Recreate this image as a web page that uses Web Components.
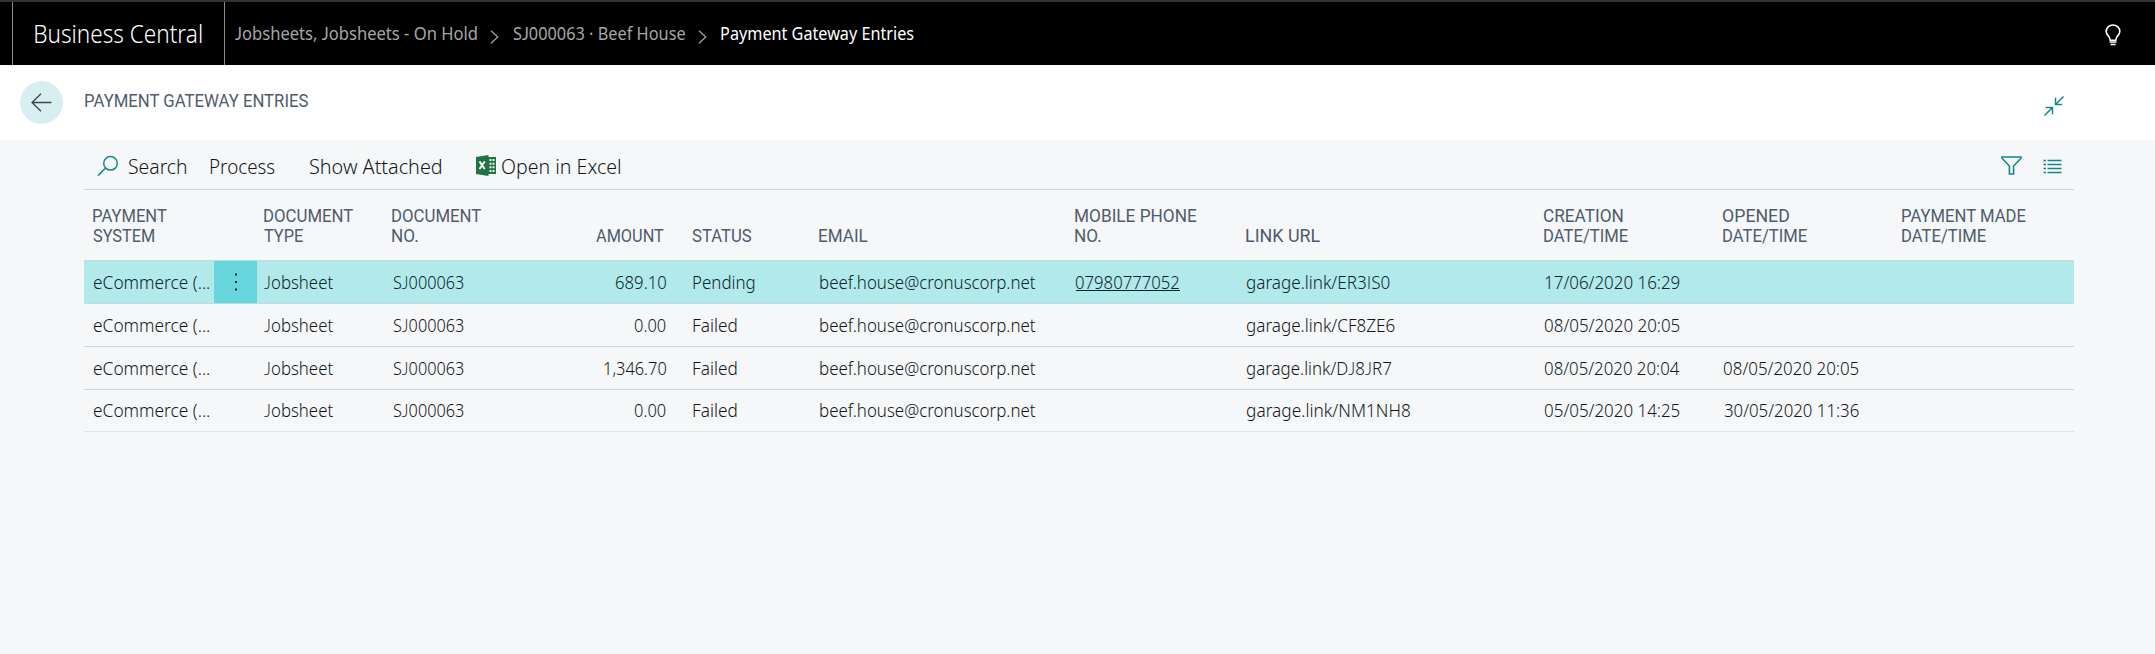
<!DOCTYPE html>
<html lang="en">
<head>
<meta charset="utf-8">
<title>Payment Gateway Entries</title>
<style>
html,body{margin:0;padding:0;background:#f5f7f9}
body{font-family:"Noto Sans","Open Sans",sans-serif;width:2155px;height:654px;overflow:hidden}
</style>
</head>
<body>
<bc-app></bc-app>
<script>
const define = (name, html, init) => customElements.define(name, class extends HTMLElement {
  connectedCallback() {
    if (this.shadowRoot) return;
    this.attachShadow({mode: 'open'}).innerHTML = html;
    if (init) init(this, this.shadowRoot);
  }
});

/* Single-line label whose glyphs are fitted to the width given in "w".
   Capital I and J use Lato, whose forms are plain and sit on the baseline. */
const ruler = document.createElement('canvas').getContext('2d');
define('bc-text', `<style>
  :host{display:block;flex:none;white-space:nowrap;line-height:20px;font-size:18px}
  span{display:block;width:max-content;transform-origin:0 50%}
  i{font-style:normal;font-family:Lato,sans-serif;line-height:0}
</style><span></span>`, (el, root) => {
  const span = root.querySelector('span'), w = +el.getAttribute('w');
  const cs = getComputedStyle(span);
  const runs = cs.fontFamily.startsWith('Roboto') ? [el.getAttribute('label')] : el.getAttribute('label').split(/([IJ])/).filter(Boolean);
  let total = 0, left = 0;
  runs.forEach((t, i) => {
    const alt = runs.length > 1 && /^[IJ]$/.test(t);
    ruler.font = `${cs.fontWeight} ${cs.fontSize} ${alt ? 'Lato' : cs.fontFamily}`;
    const m = ruler.measureText(t);
    if (i === 0) left = m.actualBoundingBoxLeft;
    total += i === runs.length - 1 ? m.actualBoundingBoxRight : m.width;
    if (alt) { const e = document.createElement('i'); e.textContent = t; span.append(e); }
    else span.append(t);
  });
  const s = w / (left + total);
  el.style.width = w + 'px';
  span.style.transform = `translateX(${left * s}px) scaleX(${s})`;
});

const icons = {
  back: [21, 19, '<path d="M1 9.5H20.5M10 .8 1 9.5l9 8.7" stroke-width="1.3"/>'],
  chevron: [9, 14, '<path d="M1 .7 7.8 7 1 13.3" stroke-width="1.2"/>'],
  bulb: [16, 22, '<path d="M5 15.5C5 12 1.2 11.200 1.200 7.500a6.800 6.500 0 0 1 13.600 0C14.800 11.200 11 12 11 15.500M4.500 16.200h7M4.500 18h7" stroke-width="1.600"/><path d="M5.500 20.500h5" stroke-width="1.600"/>'],
  collapse: [20, 20, '<path d="M19.500.5 11.500 8.500M11.500 1.800v6.700h6.700M.5 19.500l8-8M1.800 11.500h6.700v6.700" stroke-width="1.500"/>'],
  search: [22, 22, '<circle cx="13.500" cy="8.300" r="6.800" stroke-width="1.500"/><path d="M8.600 13 1 20.600" stroke-width="1.500"/>'],
  filter: [21, 19, '<path d="M1 1h19v1.200L12.600 10v8H8.400v-8L1 2.200z" stroke-width="1.600"/>'],
  list: [19, 14, '<path d="M.5 1.500h2.500M4.500 1.500h14M.5 5.500h2.500M4.500 5.500h14M.5 9.500h2.500M4.500 9.500h14M.5 13.500h2.500M4.500 13.500h14" stroke-width="1.500"/>'],
  excel: [21, 21, '<path d="M12 2h8v17H12z" fill="#217346" stroke="none"/><path d="M13.500 5h2M16.500 5h2M13.500 8.700h2M16.500 8.700h2M13.500 12.300h2M16.500 12.300h2M13.500 16h2M16.500 16h2" stroke="#e9f3ed" stroke-width="2"/><path d="M0 2 12.500 0v21L0 19z" fill="#217346" stroke="none"/><path d="M3.500 6.500 8.700 14M8.700 6.500 3.500 14" stroke="#fff" stroke-width="1.900"/>'],
  more: [4, 20, '<g fill="currentColor" stroke="none"><rect x="1" y="1.500" width="2" height="2"/><rect x="1" y="9" width="2" height="2"/><rect x="1" y="16.500" width="2" height="2"/></g>']
};
define('bc-icon', `<style>:host{display:block;flex:none}svg{display:block;overflow:visible}</style>`, (el, root) => {
  const [w, h, d] = icons[el.getAttribute('name')];
  root.innerHTML += `<svg width="${w}" height="${h}" viewBox="0 0 ${w} ${h}" fill="none" stroke="currentColor">${d}</svg>`;
});

define('bc-topbar', `<style>
  :host{display:flex;box-sizing:border-box;height:65px;background:#000;border-top:2px solid #333;color:#a6a6a6;padding-left:12px}
  .brand{box-sizing:border-box;width:213px;border:solid #8a8a8a;border-width:0 1px;padding:15px 0 0 22px;color:#fff}
  .brand bc-text{font-size:25px;line-height:32px;font-weight:300}
  nav{display:flex;padding:21px 0 0 10px}
  nav bc-icon{margin:7px 14px 0 12.500px}
  .cur{color:#fff}
  .bulb{margin:22px 34px 0 auto;color:#fff}
</style>
<div class="brand"><bc-text w="166.500" label="Business Central"></bc-text></div>
<nav><bc-text w="242" label="Jobsheets, Jobsheets - On Hold"></bc-text><bc-icon name="chevron"></bc-icon>
<bc-text w="172.500" label="SJ000063 · Beef House"></bc-text><bc-icon name="chevron"></bc-icon>
<bc-text class="cur" w="192.500" label="Payment Gateway Entries"></bc-text></nav>
<bc-icon class="bulb" name="bulb"></bc-icon>`);

define('bc-pagehead', `<style>
  :host{display:flex;box-sizing:border-box;height:75px;background:#fff;padding:16px 91px 0 20px;color:#505c6d}
  .back{display:grid;place-items:center;width:43px;height:43px;border-radius:50%;background:#d8eff1;color:#3c464c}
  bc-text{margin:10px 0 0 22px;font-family:Roboto,sans-serif}
  .c{margin:15px 0 0 auto;color:#17868c}
</style><div class="back"><bc-icon name="back"></bc-icon></div>
<bc-text w="224" label="PAYMENT GATEWAY ENTRIES"></bc-text><bc-icon class="c" name="collapse"></bc-icon>`);

define('bc-actions', `<style>
  :host{display:flex;box-sizing:border-box;height:50px;margin:0 81px 0 84px;border-bottom:1px solid #d0d3d6;padding:15px 12px 0 13px;color:#14171a}
  bc-text{font-size:19.500px;line-height:24px;font-weight:350}
  .t{color:#17868c}
</style>
<bc-icon class="t" name="search"></bc-icon><bc-text style="margin-left:9.500px" w="57" label="Search"></bc-text>
<bc-text style="margin-left:24.500px" w="65" label="Process"></bc-text>
<bc-text style="margin-left:35px" w="131" label="Show Attached"></bc-text>
<bc-icon style="margin-left:34.500px" name="excel"></bc-icon><bc-text style="margin-left:5px" w="118" label="Open in Excel"></bc-text>
<bc-icon class="t" style="margin:1px 0 0 auto" name="filter"></bc-icon>
<bc-icon class="t" style="margin:4px 0 0 21px" name="list"></bc-icon>`);

const columns = '130px 43px 128px 128px 172px 127px 256px 171px 298px 179px 179px 179px';
const heads = [
  [['PAYMENT', 74], ['SYSTEM', 61.5]], [], [['DOCUMENT', 89.5], ['TYPE', 39]], [['DOCUMENT', 89.5], ['NO.', 26]],
  [['AMOUNT', 68]], [['STATUS', 60]], [['EMAIL', 49]], [['MOBILE PHONE', 121.5], ['NO.', 26]], [['LINK URL', 74.5]],
  [['CREATION', 79], ['DATE/TIME', 84]], [['OPENED', 66], ['DATE/TIME', 84]], [['PAYMENT MADE', 124], ['DATE/TIME', 84]]
];
define('bc-heads', `<style>
  :host{display:grid;grid-template-columns:${columns};height:70px;align-items:end;color:#505c6d;font-family:Roboto,sans-serif}
  div{padding:0 0 14px 7px}.p{padding-left:9px}
  .n{justify-self:end;padding-right:21px}
</style>` + heads.map((c, i) => `<div class="${i === 4 ? 'n' : i === 0 ? 'p' : ''}">${c.map(([t, w]) => `<bc-text w="${w}" label="${t}"></bc-text>`).join('')}</div>`).join(''));

define('bc-row', `<style>
  :host{display:grid;grid-template-columns:${columns};box-sizing:border-box;height:43px;border-bottom:1px solid #d0d3d6;color:#14171a;font-weight:350}
  :host([selected]){height:44px;background:#b2eaeb;border-top:1px solid #bfdcde;border-bottom-color:#bfdcde;color:#0c262b}
  :host([last]){height:42px;border-bottom-color:#e0e3e6}
  div{padding:11px 0 0 8px}
  :host([last]) div{padding-top:10px}
  .f{padding-left:10px}.n{justify-self:end;padding-right:19px}
  .j{padding-left:7px}
  .m{padding:0;display:grid;place-items:center}
  :host([selected]) .m{background:#66d5dc}
  .u bc-text{border-bottom:1px solid #0c262b;height:18px}
</style>`, (el, root) => {
  const [amount, aw, status, sw, phone, link, lw, created, opened] = el.data;
  const cell = (t, w, c = '') => `<div class="${c}">${t ? `<bc-text w="${w}" label="${t}"></bc-text>` : ''}</div>`;
  root.innerHTML += cell('eCommerce (...', 115, 'f')
    + `<div class="m">${el.hasAttribute('selected') ? '<bc-icon name="more"></bc-icon>' : ''}</div>`
    + cell('Jobsheet', 69, 'j') + cell('SJ000063', 71) + cell(amount, aw, 'n') + cell(status, sw)
    + cell('beef.house@cronuscorp.net', 215.5) + cell(phone, 103.5, 'u') + cell('garage.link/' + link, lw)
    + cell(created, 135) + cell(opened, 135) + cell('', 0);
});

const entries = [
  ['689.10', 50.5, 'Pending', 62, '07980777052', 'ER3IS0', 143, '17/06/2020 16:29', ''],
  ['0.00', 31, 'Failed', 44, '', 'CF8ZE6', 148, '08/05/2020 20:05', ''],
  ['1,346.70', 62.5, 'Failed', 44, '', 'DJ8JR7', 144.5, '08/05/2020 20:04', '08/05/2020 20:05'],
  ['0.00', 31, 'Failed', 44, '', 'NM1NH8', 163.5, '05/05/2020 14:25', '30/05/2020 11:36']
];
define('bc-entries', `<style>:host{display:block;width:1990px;margin-left:84px}</style><bc-heads></bc-heads>`, (el, root) => {
  entries.forEach((data, i) => {
    const row = document.createElement('bc-row');
    row.data = data;
    row.toggleAttribute('selected', i === 0);
    row.toggleAttribute('last', i === entries.length - 1);
    root.append(row);
  });
});

define('bc-app', `<style>:host{display:flex;flex-direction:column;height:654px;background:#f5f7f9}</style>
<bc-topbar></bc-topbar><bc-pagehead></bc-pagehead><bc-actions></bc-actions><bc-entries></bc-entries>`);
</script>
</body>
</html>
